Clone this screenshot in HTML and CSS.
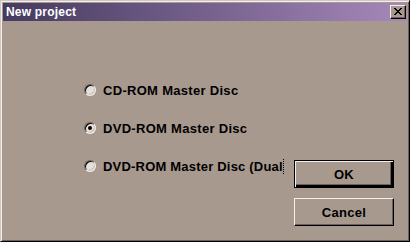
FILE: index.html
```html
<!DOCTYPE html>
<html>
<head>
<meta charset="utf-8">
<link rel="stylesheet" href="styles.css">
</head>
<body>
<div class="window">
  <div class="titlebar">
    <span class="title">New project</span>
    <button class="close" aria-label="Close">
      <svg width="8" height="7" viewBox="0 0 8 7"><path d="M0 0h2v1h1v1h2V1h1V0h2v1H7v1H6v1H5v1h1v1h1v1h1v1H6V6H5V5H3v1H2v1H0V6h1V5h1V4h1V3H2V2H1V1H0z" fill="#000"/></svg>
    </button>
  </div>
  <div class="content">
    <div class="radios">
      <label class="radio"><span class="dot"></span><span class="label">CD-ROM Master Disc</span></label>
      <label class="radio checked"><span class="dot"></span><span class="label">DVD-ROM Master Disc</span></label>
      <label class="radio"><span class="dot"></span><span class="label clip">DVD-ROM Master Disc (Dual</span></label>
    </div>
    <div class="buttons">
      <button class="btn default">OK</button>
      <button class="btn">Cancel</button>
    </div>
  </div>
</div>
</body>
</html>
```
FILE: styles.css
```css
* { box-sizing: border-box; }
html, body { margin: 0; padding: 0; }
body {
  width: 410px;
  height: 242px;
  overflow: hidden;
  background: #a8998f;
  font-family: "Liberation Sans", Arial, sans-serif;
}
.window {
  width: 410px;
  height: 242px;
  background: #a8998f;
  border-top: 1px solid #d2c6c0;
  border-left: 1px solid #d2c6c0;
  border-right: 1px solid #000;
  border-bottom: 1px solid #000;
  box-shadow: inset 1px 1px 0 #f4efec, inset -1px -1px 0 #6e605a;
  padding: 2px;
  display: flex;
  flex-direction: column;
}
.titlebar {
  height: 18px;
  background: linear-gradient(to right, #453a5f, #a688ba);
  display: flex;
  align-items: center;
  justify-content: space-between;
  padding: 0 1px 0 3px;
}
.title {
  color: #fff;
  font-weight: bold;
  font-size: 12px;
  letter-spacing: 0.2px;
}
.close {
  width: 16px;
  height: 14px;
  padding: 0;
  margin: 0;
  background: #a8998f;
  border-top: 1px solid #f4efec;
  border-left: 1px solid #f4efec;
  border-right: 1px solid #000;
  border-bottom: 1px solid #000;
  box-shadow: inset -1px -1px 0 #6e605a;
  display: flex;
  align-items: center;
  justify-content: center;
}
.close svg { display: block; margin-top: -1px; }
.content {
  flex: 1;
  display: flex;
  align-items: flex-start;
  padding-left: 81px;
}
.radios {
  margin-top: 63px;
  width: 202px;
  display: flex;
  flex-direction: column;
  gap: 26px;
}
.radio {
  display: flex;
  align-items: center;
  height: 12px;
  font-size: 13px;
  font-weight: bold;
  color: #000;
  white-space: nowrap;
  letter-spacing: 0.3px;
}
.dot {
  flex: none;
  width: 12px;
  height: 12px;
  border-radius: 50%;
  background: #e6e0dc;
  border: 1px solid;
  border-color: #6e605a #f4efec #f4efec #6e605a;
  box-shadow: inset 1px 1px 0 #000, inset -1px -1px 0 #c8bcb4;
  position: relative;
}
.checked .dot::after {
  content: "";
  position: absolute;
  left: 3px;
  top: 3px;
  width: 4px;
  height: 4px;
  border-radius: 50%;
  background: #000;
}
.label { margin-left: 7px; }
.clip {
  letter-spacing: 0.2px;
  padding-right: 0;
  border-right: 1px dotted #000;
}
.buttons {
  margin-top: 139px;
  margin-left: 8px;
  display: flex;
  flex-direction: column;
  gap: 10px;
}
.btn {
  width: 100px;
  height: 28px;
  margin: 0;
  padding: 0;
  background: #a8998f;
  font-family: "Liberation Sans", Arial, sans-serif;
  font-size: 13px;
  font-weight: bold;
  letter-spacing: 0.3px;
  color: #000;
  border-top: 1px solid #f4efec;
  border-left: 1px solid #f4efec;
  border-right: 1px solid #000;
  border-bottom: 1px solid #000;
  box-shadow: inset -1px -1px 0 #6e605a;
}
.btn.default {
  border: 1px solid #000;
  box-shadow: inset 1px 1px 0 #f4efec, inset -2px -2px 0 #000, inset -3px -3px 0 #6e605a;
}
```
